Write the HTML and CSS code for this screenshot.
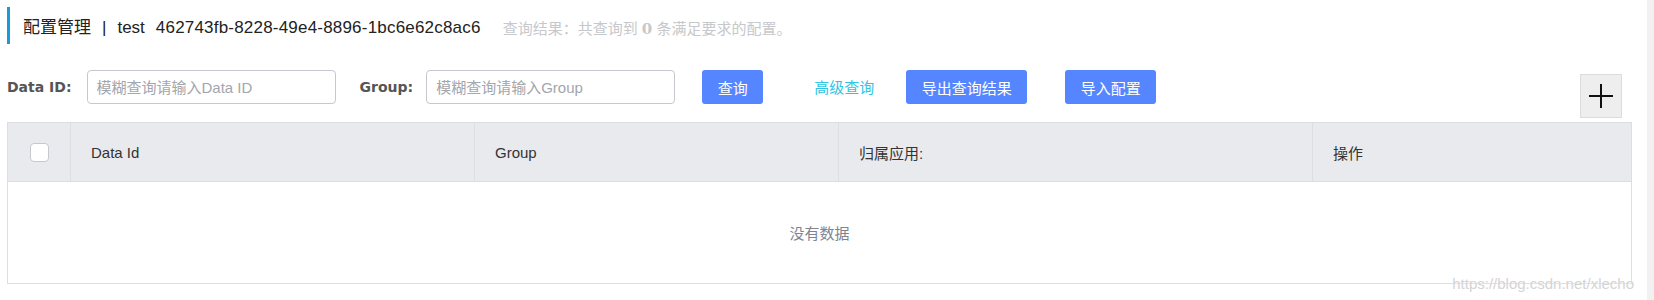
FILE: index.html
```html
<!DOCTYPE html>
<html lang="zh-CN">

<head>
  <meta charset="UTF-8" />
  <meta name="viewport" content="width=device-width, initial-scale=1" />
  <title>配置管理</title>
  <link rel="stylesheet" href="styles.css">
</head>

<body>
  <div class="page">
    <div class="page-title">
      <h1>配置管理<span class="sep">|</span>test<span class="ns-id">462743fb-8228-49e4-8896-1bc6e62c8ac6</span></h1>
      <span class="summary">查询结果：共查询到 <strong>0</strong> 条满足要求的配置。</span>
    </div>

    <div class="toolbar">
      <label class="field-label label-dataid" for="dataId">Data ID:</label>
      <input class="field-input" id="dataId" type="text" placeholder="模糊查询请输入Data ID">
      <label class="field-label label-group" for="group">Group:</label>
      <input class="field-input" id="group" type="text" placeholder="模糊查询请输入Group">
      <button class="btn btn-query">查询</button>
      <a class="adv-link" href="#">高级查询</a>
      <button class="btn btn-export">导出查询结果</button>
      <button class="btn btn-import">导入配置</button>
      <button class="add-btn" aria-label="新建配置">
        <svg width="26" height="26" viewBox="0 0 26 26">
          <path d="M13 1V25M1 13H25" stroke="#111" stroke-width="2" fill="none" />
        </svg>
      </button>
    </div>

    <div class="table-wrap">
      <table class="config-table">
        <colgroup>
          <col style="width: 63px">
          <col style="width: 404px">
          <col style="width: 364px">
          <col style="width: 474px">
          <col>
        </colgroup>
        <thead>
          <tr>
            <th class="col-check"><span class="checkbox"></span></th>
            <th>Data Id</th>
            <th>Group</th>
            <th>归属应用:</th>
            <th>操作</th>
          </tr>
        </thead>
        <tbody>
          <tr>
            <td class="empty" colspan="5">没有数据</td>
          </tr>
        </tbody>
      </table>
      <span class="watermark">https://blog.csdn.net/xlecho</span>
    </div>
  </div>
  <div class="scroll-track"></div>
</body>

</html>
```

FILE: styles.css
```css
* {
  box-sizing: border-box;
}

html,
body {
  height: 100%;
}

body {
  margin: 0;
  display: flex;
  font-family: "Liberation Sans", "Noto Sans CJK SC", sans-serif;
  font-size: 15px;
  color: #333;
  background-color: #fff;
}

.page {
  flex: 1;
  padding: 7px 15px 0 7px;
}

.scroll-track {
  width: 7px;
  background-color: #f1f1f1;
}

/* titulo */
.page-title {
  display: flex;
  align-items: center;
  height: 37px;
  border-left: 3px solid #1a9bd7;
  padding-left: 13px;
}

.page-title h1 {
  margin: 0;
  font-size: 17px;
  font-weight: 400;
  color: #222;
  white-space: nowrap;
}

.page-title .sep {
  margin: 0 11px;
}

.page-title .ns-id {
  margin-left: 11px;
  letter-spacing: 0.2px;
}

.summary {
  margin-left: 22px;
  margin-top: 3px;
  font-size: 15px;
  color: #c6c8cc;
}

.summary strong {
  font-family: "DejaVu Serif", serif;
  font-weight: 700;
}

/* barra de busca */
.toolbar {
  display: flex;
  align-items: flex-start;
  margin-top: 26px;
}

.field-label {
  height: 34px;
  line-height: 34px;
  font-family: "DejaVu Sans", sans-serif;
  font-size: 14px;
  font-weight: 700;
  color: #555;
}

.label-dataid {
  margin-right: 15px;
}

.label-group {
  margin-left: 24px;
  margin-right: 13px;
}

.field-input {
  width: 249px;
  height: 34px;
  padding: 0 9px;
  border: 1px solid #c5c8ce;
  border-radius: 4px;
  font-family: "Liberation Sans", "Noto Sans CJK SC", sans-serif;
  font-size: 15px;
  color: #333;
}

.field-input::placeholder {
  color: #a3a6ad;
}

.btn {
  height: 34px;
  padding: 0 15.5px;
  border: none;
  border-radius: 3px;
  background-color: #5686ff;
  color: #fff;
  font-family: "Noto Sans CJK SC", sans-serif;
  font-size: 15px;
  cursor: pointer;
}

.btn-query {
  margin-left: 27px;
}

.adv-link {
  margin-left: 51px;
  line-height: 34px;
  color: #2fc4e4;
  text-decoration: none;
  font-family: "Noto Sans CJK SC", sans-serif;
}

.btn-export {
  margin-left: 32px;
}

.btn-import {
  margin-left: 38px;
}

.add-btn {
  margin-left: auto;
  margin-right: 10px;
  margin-top: 4px;
  width: 42px;
  height: 44px;
  padding: 0;
  border: 1px solid #dcdcdc;
  background-color: #eee;
  display: flex;
  align-items: center;
  justify-content: center;
  cursor: pointer;
}

/* tabela */
.table-wrap {
  position: relative;
  margin-top: 4px;
}

.config-table {
  width: 100%;
  border-collapse: collapse;
  table-layout: fixed;
  border: 1px solid #dcdee2;
}

.config-table th {
  height: 59px;
  padding: 0 0 0 20px;
  background-color: #e9eaee;
  border-left: 1px solid #dcdee2;
  border-bottom: 1px solid #dcdee2;
  text-align: left;
  font-weight: 400;
  font-size: 15px;
  color: #333;
}

.config-table th.col-check {
  padding: 0;
  text-align: center;
  border-left: none;
}

.checkbox {
  display: inline-block;
  width: 19px;
  height: 19px;
  border: 1px solid #c5c8ce;
  border-radius: 4px;
  background-color: #fff;
  vertical-align: middle;
}

.config-table td.empty {
  height: 102px;
  text-align: center;
  color: #80848f;
  font-family: "Noto Sans CJK SC", sans-serif;
  font-size: 15px;
}

.watermark {
  position: absolute;
  right: -2px;
  bottom: -8px;
  font-size: 15px;
  color: #d4d4d4;
  text-shadow: 0 0 2px #fff;
}
```
